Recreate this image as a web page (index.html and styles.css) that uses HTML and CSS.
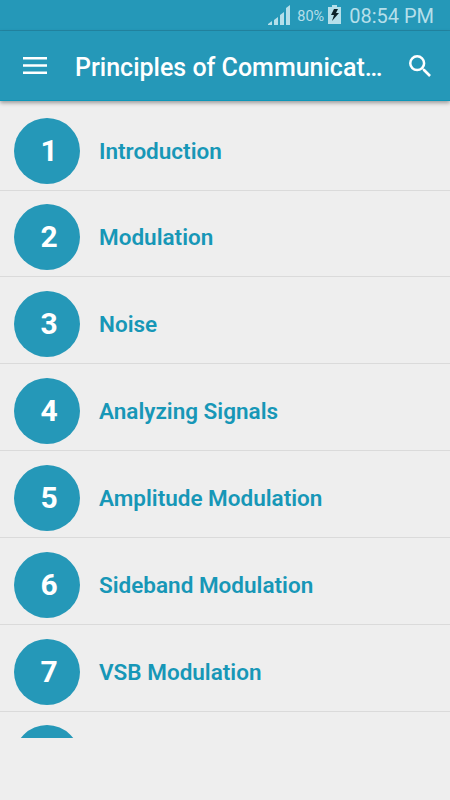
FILE: index.html
```
<!DOCTYPE html>
<html lang="en">
<head>
  <meta charset="UTF-8">
  <meta name="viewport" content="width=device-width, initial-scale=1.0">
  <title>Principles of Communication</title>
  <link rel="stylesheet" href="styles.css">
</head>
<body>
  <div class="status-bar">
    <svg class="signal" width="22" height="20" viewBox="0 0 22 20">
      <path d="M0 20v-1l4-3v4zM6 20v-5l4-3v8zM12 20V10l4-3v13zM18 20V3l4-3v20z" fill="#b5dfea"/>
    </svg>
    <span class="percent">80%</span>
    <svg class="battery" width="13" height="19" viewBox="0 0 13 19">
      <path d="M4 0h5v2h4v17H0V2h4z" fill="#b5dfea"/>
      <path d="M6 4h4L8 8h3l-7 8 2-6H3z" fill="#0c2229"/>
    </svg>
    <span class="time">08:54 PM</span>
  </div>

  <header class="toolbar">
    <button class="menu-btn" aria-label="Menu">
      <svg width="24" height="17" viewBox="0 0 24 17">
        <path d="M0 0h24v2.6H0zM0 7.2h24v2.6H0zM0 14.4h24V17H0z" fill="#fff"/>
      </svg>
    </button>
    <h1>Principles of Communicat…</h1>
    <button class="search-btn" aria-label="Search">
      <svg width="22" height="22" viewBox="3 3 17.5 17.5">
        <path d="M15.5 14h-.79l-.28-.27A6.47 6.47 0 0 0 16 9.5 6.5 6.5 0 1 0 9.5 16c1.61 0 3.09-.59 4.23-1.57l.27.28v.79l5 4.99L20.49 19l-4.99-5zm-6 0a4.5 4.5 0 1 1 0-9 4.5 4.5 0 0 1 0 9z" fill="#fff"/>
      </svg>
    </button>
  </header>

  <ul class="chapters">
    <li><span class="number">1</span><span class="name">Introduction</span></li>
    <li><span class="number">2</span><span class="name">Modulation</span></li>
    <li><span class="number">3</span><span class="name">Noise</span></li>
    <li><span class="number">4</span><span class="name">Analyzing Signals</span></li>
    <li><span class="number">5</span><span class="name">Amplitude Modulation</span></li>
    <li><span class="number">6</span><span class="name">Sideband Modulation</span></li>
    <li><span class="number">7</span><span class="name">VSB Modulation</span></li>
    <li><span class="number"></span></li>
  </ul>
</body>
</html>
```

FILE: styles.css
```
* {
  box-sizing: border-box;
}

body {
  margin: 0;
  height: 800px;
  overflow: hidden;
  background-color: #eeeeee;
  font-family: Roboto, sans-serif;
}

/* Status bar */
.status-bar {
  display: flex;
  height: 31px;
  padding: 5px 16px 0 0;
  justify-content: flex-end;
  background-color: #2598b8;
  border-bottom: 1px solid #2387a4;
  color: #b5dfea;
}

.percent {
  margin-left: 7px;
  font-size: 14.5px;
  line-height: 23px;
}

.battery {
  margin-left: 4px;
}

.time {
  margin-left: 8px;
  font-size: 20px;
  line-height: 23px;
}

/* Toolbar */
.toolbar {
  position: relative;
  display: flex;
  align-items: center;
  height: 70px;
  padding: 0 19px 0 23px;
  background-color: #2598b8;
  border-bottom: 1px solid #0d96b8;
  box-shadow: 0 2px 4px rgba(0, 0, 0, 0.35);
  color: #fff;
}

.toolbar button {
  display: flex;
  padding: 0;
  border: none;
  background: none;
}

.toolbar h1 {
  flex: 1;
  margin: 5px 0 0 28px;
  font-size: 25px;
  font-weight: 500;
  line-height: 32px;
  white-space: nowrap;
}

/* Chapter list */
.chapters {
  height: 636.5px;
  margin: 0;
  padding: 2.8px 0 0;
  overflow: hidden;
  list-style: none;
}

.chapters li {
  display: flex;
  align-items: center;
  height: 86.85px;
  padding: 7.6px 0 0 14px;
  border-bottom: 1px solid #dadada;
}

.number {
  width: 66px;
  height: 66px;
  padding-left: 4px;
  border-radius: 50%;
  background-color: #2598b8;
  color: #fff;
  font-size: 30px;
  font-weight: 700;
  line-height: 66px;
  text-align: center;
}

.name {
  margin-left: 19px;
  color: #1797b7;
  font-size: 22.5px;
  font-weight: 600;
}
```
